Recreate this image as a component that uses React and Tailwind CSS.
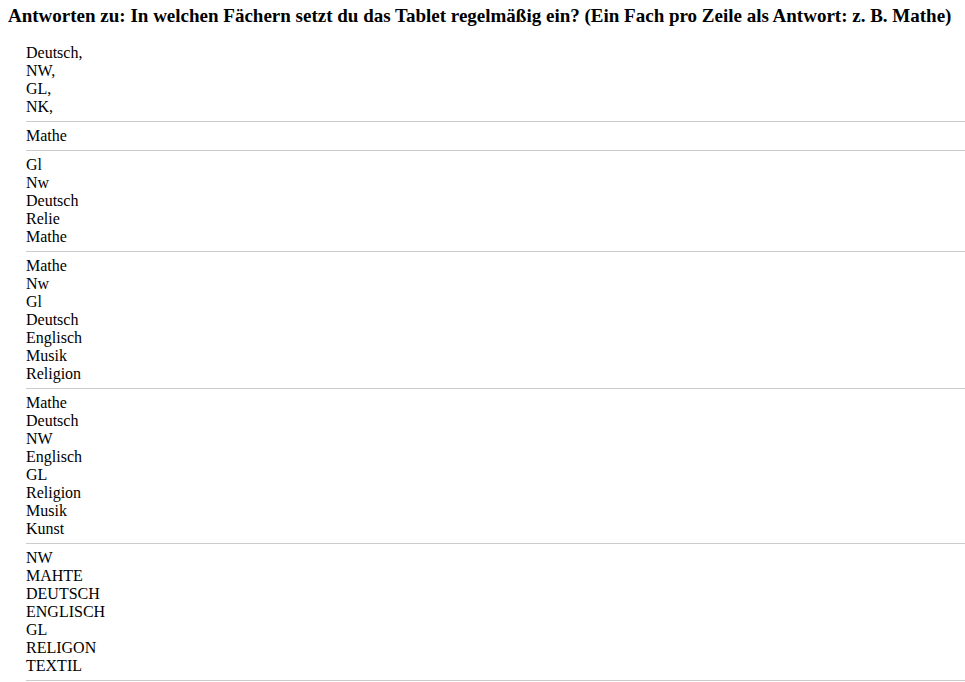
const answers = [
  ["Deutsch,", "NW,", "GL,", "NK,"],
  ["Mathe"],
  ["Gl", "Nw", "Deutsch", "Relie", "Mathe"],
  ["Mathe", "Nw", "Gl", "Deutsch", "Englisch", "Musik", "Religion"],
  ["Mathe", "Deutsch", "NW", "Englisch", "GL", "Religion", "Musik", "Kunst"],
  ["NW", "MAHTE", "DEUTSCH", "ENGLISCH", "GL", "RELIGON", "TEXTIL"],
];

export default function App() {
  return (
    <div className="min-h-screen bg-white text-black font-['Liberation_Serif','Times_New_Roman',serif]">
      <h1 className="pl-2 pt-[6px] text-[19px] leading-[20px] font-bold whitespace-nowrap">
        Antworten zu: In welchen Fächern setzt du das Tablet regelmäßig ein? (Ein Fach pro Zeile als Antwort: z. B. Mathe)
      </h1>
      <ul className="pl-[26px] mt-[13px]">
        {answers.map((lines, i) => (
          <li key={i} className="pt-[5px] pb-[5px] border-b border-[#cccccc] text-[16px] leading-[18px]">
            {lines.map((l, j) => (
              <div key={j}>{l}</div>
            ))}
          </li>
        ))}
      </ul>
    </div>
  );
}
